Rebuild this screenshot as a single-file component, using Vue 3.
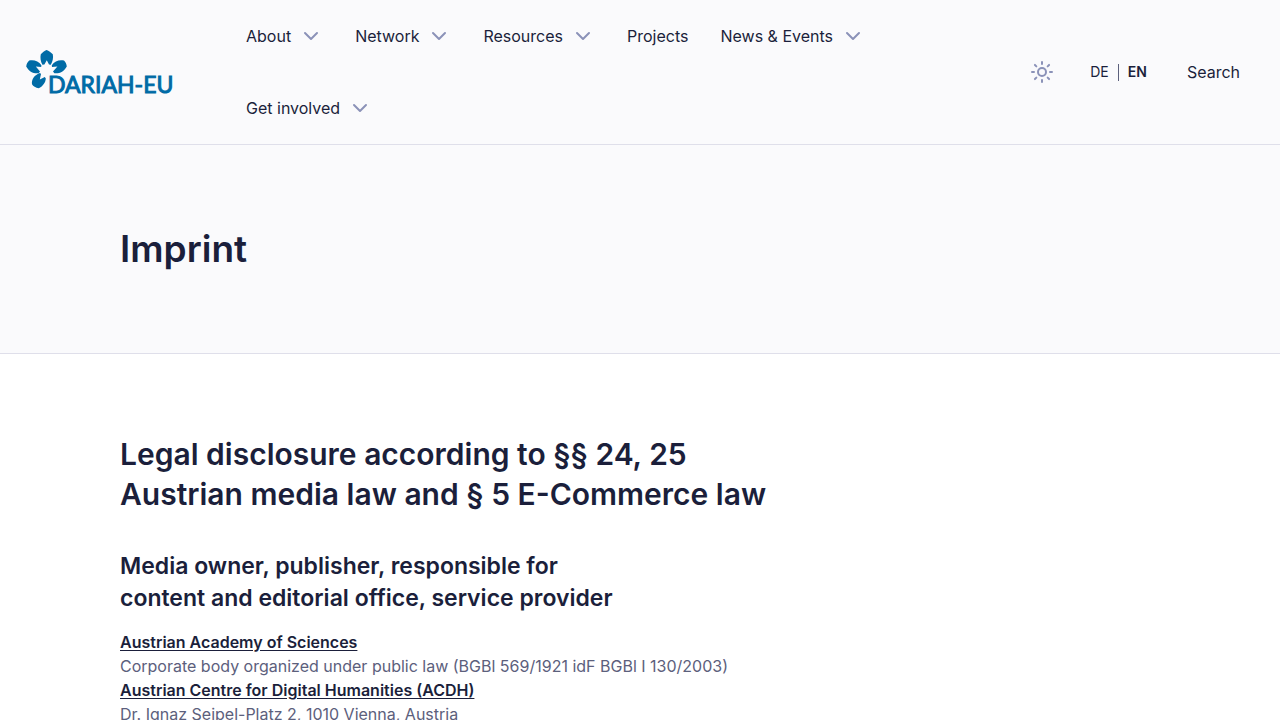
<script setup>
const navItems = [
  { label: 'About', menu: true },
  { label: 'Network', menu: true },
  { label: 'Resources', menu: true },
  { label: 'Projects', menu: false },
  { label: 'News & Events', menu: true },
  { label: 'Get involved', menu: true },
]
</script>

<template>
  <div class="page">
    <header class="header">
      <a class="logo" href="#" aria-label="DARIAH-EU home">
        <svg width="152" height="48" viewBox="0 -2 152 48" fill="#006ba6" aria-hidden="true">
          <path d="M20.6 0 C22.8 1 25 2.5 26.8 4.2 C27.6 8 26.6 11.4 24.8 14.8 L23 14.6 L20.8 10.2 L18.4 14.6 L16.4 14.8 C14.6 11.4 14 7.6 14.8 4.2 C16.4 2.4 18.4 1 20.6 0 Z" />
          <path d="M15.4 15.2 C12.6 11 8 9.7 3.2 10.6 C1.6 12 .6 14 .2 16.4 C3 21.4 7.4 23.8 12.6 23.2 L14 21.4 L9.8 16.6 L15.2 17 Z" />
          <path d="M25.8 15.2 C28.6 11 33.2 9.7 38 10.6 C39.6 12 40.4 14 40.8 16.4 C38 21.4 33.4 23.8 28.4 23.2 L27 21.4 L31.4 16.6 L26 17 Z" />
          <path d="M14 23 C8.4 25 5.4 29.2 6 34.3 C7.2 36.4 9.6 37.8 12.8 38.2 C16.4 36.4 19.6 32.8 19.8 28.4 L18.8 26.9 L13.8 29.6 L15 24 Z" />
          <text class="logo-text" x="22" y="43" font-size="23">DARIAH-EU</text>
        </svg>
      </a>

      <nav class="nav" aria-label="Main">
        <template v-for="item in navItems" :key="item.label">
          <button v-if="item.menu" class="nav-item" type="button">
            {{ item.label }}
            <svg class="icon" viewBox="0 0 24 24" aria-hidden="true"><path d="m6 9 6 6 6-6" /></svg>
          </button>
          <a v-else class="nav-item" href="#">{{ item.label }}</a>
        </template>
      </nav>

      <div class="tools">
        <button class="theme" type="button" aria-label="Toggle color scheme">
          <svg class="icon" viewBox="0 0 24 24" aria-hidden="true">
            <circle cx="12" cy="12" r="4" />
            <path d="M12 2v2M12 20v2M4.93 4.93l1.41 1.41M17.66 17.66l1.41 1.41M2 12h2M20 12h2M6.34 17.66l-1.41 1.41M19.07 4.93l-1.41 1.41" />
          </svg>
        </button>
        <div class="locales">
          <a href="#">DE</a>
          <span class="divider"></span>
          <a class="current" href="#">EN</a>
        </div>
        <a class="nav-item" href="#">Search</a>
      </div>
    </header>

    <main>
      <section class="hero">
        <h1>Imprint</h1>
      </section>
      <section class="content">
        <h2>Legal disclosure according to §§ 24, 25 Austrian media law and § 5 E-Commerce law</h2>
        <h3>Media owner, publisher, responsible for content and editorial office, service provider</h3>
        <p>
          <a href="#">Austrian Academy of Sciences</a><br />
          Corporate body organized under public law (BGBl 569/1921 idF BGBl I 130/2003)<br />
          <a href="#">Austrian Centre for Digital Humanities (ACDH)</a><br />
          Dr. Ignaz Seipel-Platz 2, 1010 Vienna, Austria
        </p>
      </section>
    </main>
  </div>
</template>

<style>
body {
  background: #fff;
}
html {
  scrollbar-width: none;
}
</style>

<style scoped>
.page {
  color: #1b1f3b;
  font-family: Inter, sans-serif;
  font-size: 16px;
  line-height: 24px;
}
a {
  color: inherit;
  text-decoration: none;
}
button {
  padding: 0;
  border: 0;
  background: none;
  color: inherit;
  font: inherit;
}
.header {
  display: flex;
  align-items: center;
  padding: 0 24px;
  border-bottom: 1px solid #dfdfea;
  background: #fafafc;
}
.logo {
  flex: none;
  display: flex;
  padding-left: 2px;
}
.logo-text {
  font-family: Lato, sans-serif;
  font-weight: 400;
  stroke: #006ba6;
  stroke-width: 1px;
}
.nav {
  flex: 1;
  display: flex;
  flex-wrap: wrap;
  margin: 0 112px 0 52px;
}
.nav-item {
  display: flex;
  align-items: center;
  gap: 8px;
  height: 72px;
  padding: 0 16px;
}
.icon {
  width: 24px;
  height: 24px;
  fill: none;
  stroke: #8b92b8;
  stroke-width: 2;
  stroke-linecap: round;
  stroke-linejoin: round;
}
.tools {
  display: flex;
  align-items: center;
}
.theme {
  display: flex;
}
.locales {
  display: flex;
  align-items: center;
  gap: 9px;
  padding: 0 24px 0 36px;
  font-size: 14px;
}
.divider {
  width: 1px;
  height: 17px;
  background: #5c607c;
}
.current {
  font-weight: 600;
}
.hero {
  padding: 80px 120px;
  border-bottom: 1px solid #dfdfea;
  background: #fafafc;
}
h1,
h2,
h3,
p {
  margin: 0;
}
h1,
h2,
h3 {
  font-weight: 600;
}
h1 {
  font-size: 37px;
  line-height: 48px;
}
.content {
  padding: 80px 120px;
}
h2 {
  max-width: 720px;
  margin-bottom: 36px;
  font-size: 30px;
  line-height: 40px;
  text-wrap: balance;
}
h3 {
  max-width: 720px;
  margin-bottom: 16px;
  font-size: 23px;
  line-height: 32px;
  text-wrap: balance;
}
p {
  color: #5c607c;
}
p a {
  color: #1b1f3b;
  font-weight: 600;
  text-decoration: underline;
  text-underline-offset: 2px;
}
</style>
